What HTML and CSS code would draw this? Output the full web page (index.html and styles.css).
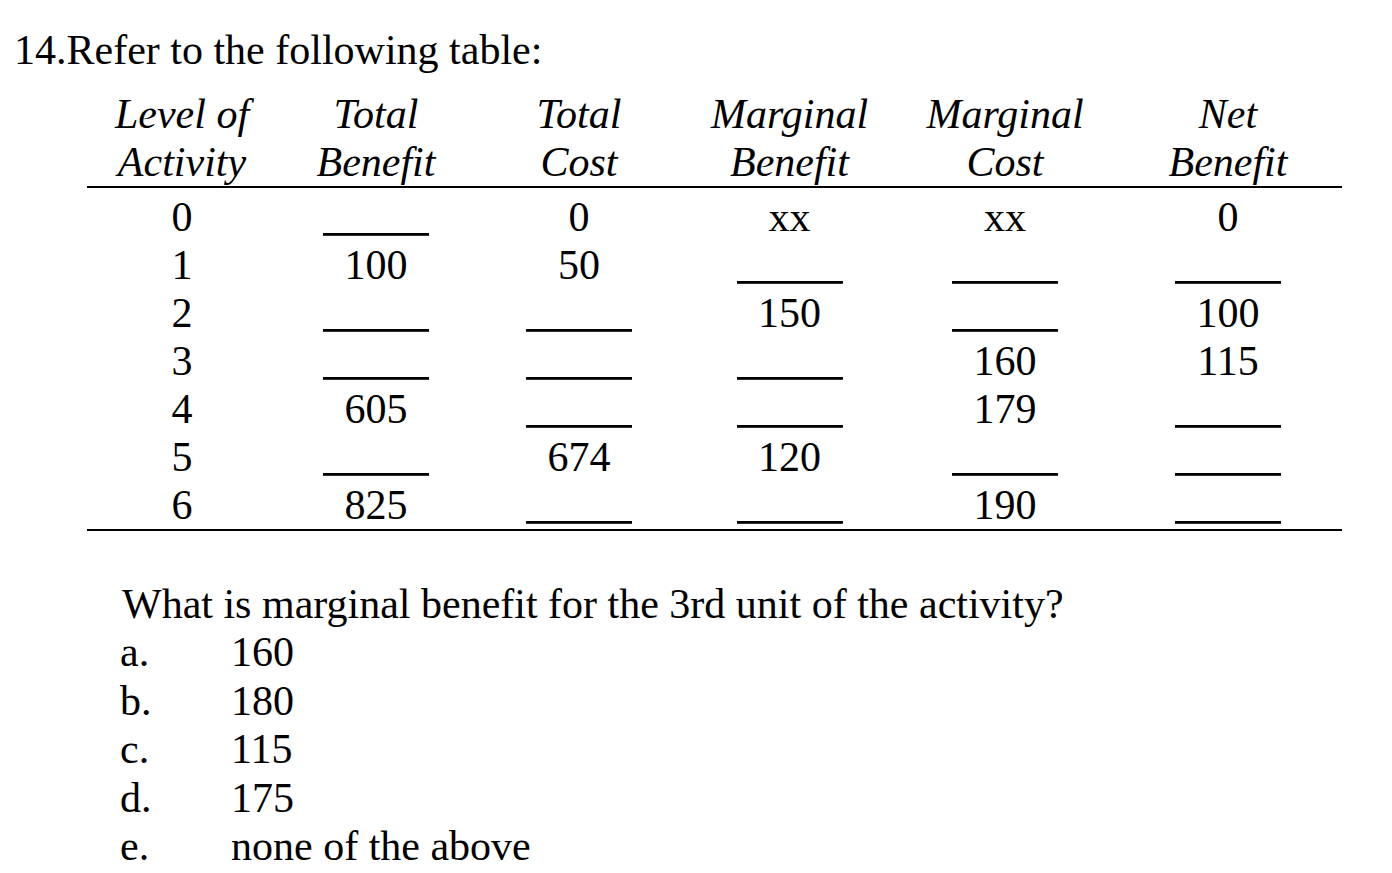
FILE: index.html
```html
<!DOCTYPE html>
<html>
<head>
<meta charset="utf-8">
<link rel="stylesheet" href="styles.css">
</head>
<body>
<div class="page">
  <p class="title">14.Refer to the following table:</p>
  <div class="table">
    <div class="thead">
      <div class="th">Level of<br>Activity</div>
      <div class="th">Total<br>Benefit</div>
      <div class="th">Total<br>Cost</div>
      <div class="th">Marginal<br>Benefit</div>
      <div class="th">Marginal<br>Cost</div>
      <div class="th">Net<br>Benefit</div>
    </div>
    <div class="tbody">
      <div class="row"><div class="td">0</div><div class="td"><span class="blank"></span></div><div class="td">0</div><div class="td">xx</div><div class="td">xx</div><div class="td">0</div></div>
      <div class="row"><div class="td">1</div><div class="td">100</div><div class="td">50</div><div class="td"><span class="blank"></span></div><div class="td"><span class="blank"></span></div><div class="td"><span class="blank"></span></div></div>
      <div class="row"><div class="td">2</div><div class="td"><span class="blank"></span></div><div class="td"><span class="blank"></span></div><div class="td">150</div><div class="td"><span class="blank"></span></div><div class="td">100</div></div>
      <div class="row"><div class="td">3</div><div class="td"><span class="blank"></span></div><div class="td"><span class="blank"></span></div><div class="td"><span class="blank"></span></div><div class="td">160</div><div class="td">115</div></div>
      <div class="row"><div class="td">4</div><div class="td">605</div><div class="td"><span class="blank"></span></div><div class="td"><span class="blank"></span></div><div class="td">179</div><div class="td"><span class="blank"></span></div></div>
      <div class="row"><div class="td">5</div><div class="td"><span class="blank"></span></div><div class="td">674</div><div class="td">120</div><div class="td"><span class="blank"></span></div><div class="td"><span class="blank"></span></div></div>
      <div class="row"><div class="td">6</div><div class="td">825</div><div class="td"><span class="blank"></span></div><div class="td"><span class="blank"></span></div><div class="td">190</div><div class="td"><span class="blank"></span></div></div>
    </div>
  </div>
  <div class="question">
    <p class="stem">What is marginal benefit for the 3rd unit of the activity?</p>
    <ol class="options">
      <li class="option"><span class="letter">a.</span><span class="answer">160</span></li>
      <li class="option"><span class="letter">b.</span><span class="answer">180</span></li>
      <li class="option"><span class="letter">c.</span><span class="answer">115</span></li>
      <li class="option"><span class="letter">d.</span><span class="answer">175</span></li>
      <li class="option"><span class="letter">e.</span><span class="answer">none of the above</span></li>
    </ol>
  </div>
</div>
</body>
</html>
```

FILE: styles.css
```css
html, body {
  margin: 0;
  padding: 0;
  background: #fff;
}
.page {
  font-family: "Liberation Serif", "Times New Roman", serif;
  color: #000;
  font-size: 42px;
  line-height: 48px;
  padding-top: 26px;
}
.title {
  margin: 0 0 0 14px;
}
.table {
  margin: 16px 0 0 87px;
  width: 1255px;
}
.thead, .row {
  display: grid;
  grid-template-columns: 190px 198px 208px 213px 218px 228px;
}
.thead {
  border-bottom: 2px solid #000;
}
.th {
  font-style: italic;
  text-align: center;
}
.tbody {
  padding-top: 5px;
  border-bottom: 2px solid #000;
}
.row {
  height: 48px;
}
.td {
  text-align: center;
  position: relative;
  height: 48px;
}
.blank {
  position: absolute;
  left: 50%;
  bottom: 5px;
  width: 106px;
  margin-left: -53px;
  height: 0;
  border-top: 2px solid #000;
  border-bottom: 1px solid #333;
}
.question {
  margin: 49px 0 0 122px;
}
.stem {
  margin: 0;
}
.options {
  list-style: none;
  margin: 0;
  padding: 0;
}
.option {
  display: flex;
  margin-left: -2px;
  height: 48.5px;
}
.letter {
  width: 111px;
}
```
